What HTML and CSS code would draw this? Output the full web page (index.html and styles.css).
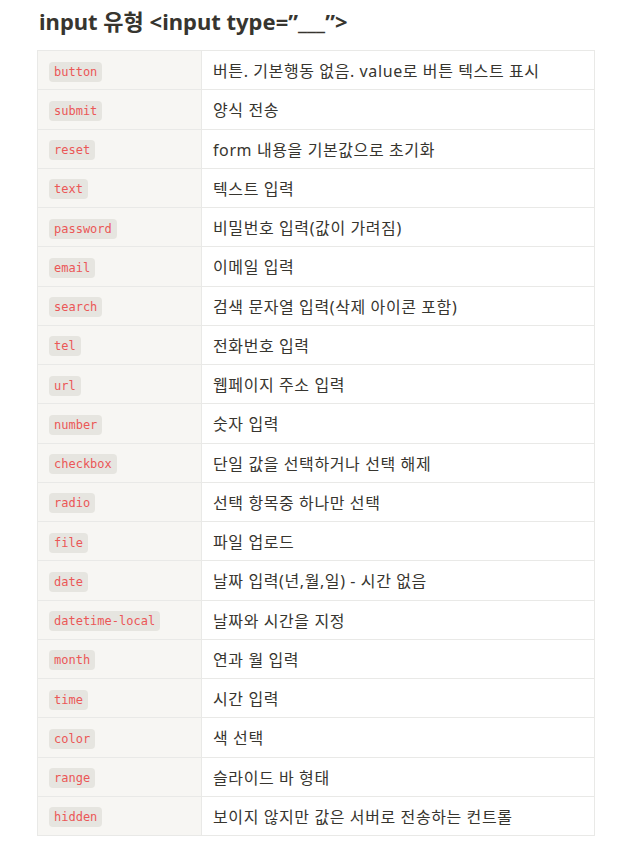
FILE: index.html
```html
<!DOCTYPE html>
<html lang="ko">
<head>
    <meta charset="UTF-8">
    <meta name="viewport" content="width=device-width, initial-scale=1.0">
    <title>input 유형</title>
    <link rel="stylesheet" href="styles.css">
</head>
<body>
    <div class="page">
        <h3 class="title">input 유형 &lt;input type=”___”&gt;</h3>
        <table class="types">
            <tbody>
                <tr><td class="name"><code>button</code></td><td>버튼. 기본행동 없음. value로 버튼 텍스트 표시</td></tr>
                <tr><td class="name"><code>submit</code></td><td>양식 전송</td></tr>
                <tr><td class="name"><code>reset</code></td><td>form 내용을 기본값으로 초기화</td></tr>
                <tr><td class="name"><code>text</code></td><td>텍스트 입력</td></tr>
                <tr><td class="name"><code>password</code></td><td>비밀번호 입력(값이 가려짐)</td></tr>
                <tr><td class="name"><code>email</code></td><td>이메일 입력</td></tr>
                <tr><td class="name"><code>search</code></td><td>검색 문자열 입력(삭제 아이콘 포함)</td></tr>
                <tr><td class="name"><code>tel</code></td><td>전화번호 입력</td></tr>
                <tr><td class="name"><code>url</code></td><td>웹페이지 주소 입력</td></tr>
                <tr><td class="name"><code>number</code></td><td>숫자 입력</td></tr>
                <tr><td class="name"><code>checkbox</code></td><td>단일 값을 선택하거나 선택 해제</td></tr>
                <tr><td class="name"><code>radio</code></td><td>선택 항목중 하나만 선택</td></tr>
                <tr><td class="name"><code>file</code></td><td>파일 업로드</td></tr>
                <tr><td class="name"><code>date</code></td><td>날짜 입력(년,월,일) - 시간 없음</td></tr>
                <tr><td class="name"><code>datetime-local</code></td><td>날짜와 시간을 지정</td></tr>
                <tr><td class="name"><code>month</code></td><td>연과 월 입력</td></tr>
                <tr><td class="name"><code>time</code></td><td>시간 입력</td></tr>
                <tr><td class="name"><code>color</code></td><td>색 선택</td></tr>
                <tr><td class="name"><code>range</code></td><td>슬라이드 바 형태</td></tr>
                <tr><td class="name"><code>hidden</code></td><td>보이지 않지만 값은 서버로 전송하는 컨트롤</td></tr>
            </tbody>
        </table>
    </div>
</body>
</html>
```

FILE: styles.css
```css
body {
    margin: 0;
    background-color: #fff;
    color: #37352f;
    font-family: "Noto Sans", "Noto Sans CJK KR", sans-serif;
}
.page {
    padding: 6px 42px 0 37px;
}
.title {
    margin: 0 0 14px 2px;
    font-size: 22px;
    font-weight: bold;
    line-height: 30px;
}
.types {
    width: 558px;
    border-collapse: collapse;
    font-size: 16px;
    letter-spacing: 0.6px;
}
.types td {
    height: 39.25px;
    box-sizing: border-box;
    padding: 0 11px;
    border: 1px solid #e9e9e7;
    vertical-align: middle;
}
.types td.name {
    width: 164px;
    background-color: #f7f6f3;
}
code {
    display: inline-block;
    padding: 0 5px;
    border-radius: 4px;
    background-color: rgba(135, 131, 120, 0.15);
    color: #eb5757;
    font-family: "DejaVu Sans Mono", monospace;
    font-size: 12px;
    line-height: 20px;
    letter-spacing: 0;
}
```
